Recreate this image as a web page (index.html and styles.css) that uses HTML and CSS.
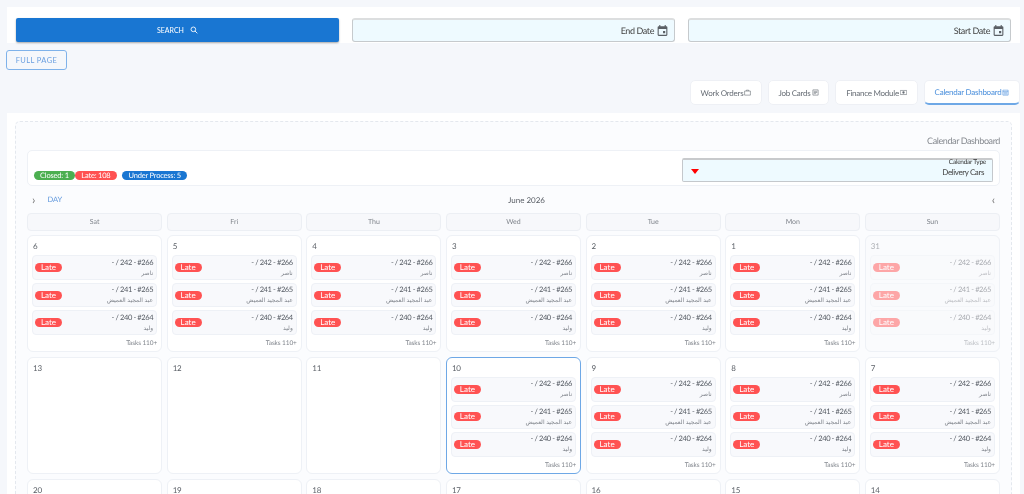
FILE: index.html
```html
<!DOCTYPE html>
<html>

<head>
    <title>Calendar Dashboard</title>
    <link rel="stylesheet" href="styles.css">
</head>

<body>
    <svg class="defs" width="0" height="0">
        <symbol id="cal" viewBox="0 0 24 24">
            <path d="M19 4h-1V2h-2v2H8V2H6v2H5a2 2 0 0 0-2 2v14a2 2 0 0 0 2 2h14a2 2 0 0 0 2-2V6a2 2 0 0 0-2-2zm0 16H5V9h14v11zM13 13h4v4h-4z" fill="currentColor" />
        </symbol>
    </svg>

    <div class="search-card">
        <button class="search-btn">SEARCH
            <svg class="search-ico" viewBox="0 0 24 24" width="8" height="8"><circle cx="10" cy="10" r="7" fill="none" stroke="#fff" stroke-width="2.6" /><path d="M15 15l7 7" stroke="#fff" stroke-width="2.6" /></svg>
        </button>
        <div class="date-input">End Date <svg class="cal-ico"><use href="#cal" /></svg></div>
        <div class="date-input">Start Date <svg class="cal-ico"><use href="#cal" /></svg></div>
    </div>

    <button class="full-page">FULL PAGE</button>

    <div class="tabs">
        <div class="tab tab-w1">Work Orders
            <svg class="tab-ico" viewBox="0 0 12 12"><path d="M1 3.5h10v7H1zM4 3.5V2h4v1.5" fill="none" stroke="currentColor" /></svg>
        </div>
        <div class="tab tab-w2">Job Cards
            <svg class="tab-ico" viewBox="0 0 12 12"><path d="M1.5 1.5h9v9h-9zM3 4h6M3 6h6M3 8h4" fill="none" stroke="currentColor" /></svg>
        </div>
        <div class="tab tab-w3">Finance Module
            <svg class="tab-ico" viewBox="0 0 12 12"><path d="M.5 2.5h11v7H.5z" fill="none" stroke="currentColor" /><circle cx="6" cy="6" r="2" fill="currentColor" /></svg>
        </div>
        <div class="tab tab-w4 active">Calendar Dashboard
            <svg class="tab-ico" viewBox="0 0 12 12"><path d="M1.5 2h9v8.5h-9zM1.5 4.5h9M3 6.5h6M3 8.5h6" fill="none" stroke="currentColor" /></svg>
        </div>
    </div>

    <div class="main-card">
        <div class="inner">
            <div class="title">Calendar Dashboard</div>

            <div class="filter-row">
                <div class="chips">
                    <span class="chip green">Closed: 1</span>
                    <span class="chip red">Late: 108</span>
                    <span class="chip blue">Under Process: 5</span>
                </div>
                <div class="select">
                    <span class="arrow"></span>
                    <div class="select-text">
                        <div class="select-label">Calendar Type</div>
                        <div class="select-value">Delivery Cars</div>
                    </div>
                </div>
            </div>

            <div class="nav-row">
                <div class="nav-left"><span class="chev">&#8250;</span><span class="day">DAY</span></div>
                <div class="month">June 2026</div>
                <div class="nav-right"><span class="chev">&#8249;</span></div>
            </div>

            <div class="week">
                <div class="wd">Sat</div>
                <div class="wd">Fri</div>
                <div class="wd">Thu</div>
                <div class="wd">Wed</div>
                <div class="wd">Tue</div>
                <div class="wd">Mon</div>
                <div class="wd">Sun</div>
            </div>

            <div class="days">
                <div class="cell">
                    <div class="num">6</div>
                    <div class="task"><span class="late">Late</span><div class="info" dir="rtl"><div class="code">#266 - 242 / -</div><div class="name">ناصر</div></div></div>
                    <div class="task"><span class="late">Late</span><div class="info" dir="rtl"><div class="code">#265 - 241 / -</div><div class="name">عبد المجيد العميض</div></div></div>
                    <div class="task"><span class="late">Late</span><div class="info" dir="rtl"><div class="code">#264 - 240 / -</div><div class="name">وليد</div></div></div>
                    <div class="more">Tasks 110+</div>
                </div>
                <div class="cell">
                    <div class="num">5</div>
                    <div class="task"><span class="late">Late</span><div class="info" dir="rtl"><div class="code">#266 - 242 / -</div><div class="name">ناصر</div></div></div>
                    <div class="task"><span class="late">Late</span><div class="info" dir="rtl"><div class="code">#265 - 241 / -</div><div class="name">عبد المجيد العميض</div></div></div>
                    <div class="task"><span class="late">Late</span><div class="info" dir="rtl"><div class="code">#264 - 240 / -</div><div class="name">وليد</div></div></div>
                    <div class="more">Tasks 110+</div>
                </div>
                <div class="cell">
                    <div class="num">4</div>
                    <div class="task"><span class="late">Late</span><div class="info" dir="rtl"><div class="code">#266 - 242 / -</div><div class="name">ناصر</div></div></div>
                    <div class="task"><span class="late">Late</span><div class="info" dir="rtl"><div class="code">#265 - 241 / -</div><div class="name">عبد المجيد العميض</div></div></div>
                    <div class="task"><span class="late">Late</span><div class="info" dir="rtl"><div class="code">#264 - 240 / -</div><div class="name">وليد</div></div></div>
                    <div class="more">Tasks 110+</div>
                </div>
                <div class="cell">
                    <div class="num">3</div>
                    <div class="task"><span class="late">Late</span><div class="info" dir="rtl"><div class="code">#266 - 242 / -</div><div class="name">ناصر</div></div></div>
                    <div class="task"><span class="late">Late</span><div class="info" dir="rtl"><div class="code">#265 - 241 / -</div><div class="name">عبد المجيد العميض</div></div></div>
                    <div class="task"><span class="late">Late</span><div class="info" dir="rtl"><div class="code">#264 - 240 / -</div><div class="name">وليد</div></div></div>
                    <div class="more">Tasks 110+</div>
                </div>
                <div class="cell">
                    <div class="num">2</div>
                    <div class="task"><span class="late">Late</span><div class="info" dir="rtl"><div class="code">#266 - 242 / -</div><div class="name">ناصر</div></div></div>
                    <div class="task"><span class="late">Late</span><div class="info" dir="rtl"><div class="code">#265 - 241 / -</div><div class="name">عبد المجيد العميض</div></div></div>
                    <div class="task"><span class="late">Late</span><div class="info" dir="rtl"><div class="code">#264 - 240 / -</div><div class="name">وليد</div></div></div>
                    <div class="more">Tasks 110+</div>
                </div>
                <div class="cell">
                    <div class="num">1</div>
                    <div class="task"><span class="late">Late</span><div class="info" dir="rtl"><div class="code">#266 - 242 / -</div><div class="name">ناصر</div></div></div>
                    <div class="task"><span class="late">Late</span><div class="info" dir="rtl"><div class="code">#265 - 241 / -</div><div class="name">عبد المجيد العميض</div></div></div>
                    <div class="task"><span class="late">Late</span><div class="info" dir="rtl"><div class="code">#264 - 240 / -</div><div class="name">وليد</div></div></div>
                    <div class="more">Tasks 110+</div>
                </div>
                <div class="cell other-month">
                    <div class="num">31</div>
                    <div class="task"><span class="late">Late</span><div class="info" dir="rtl"><div class="code">#266 - 242 / -</div><div class="name">ناصر</div></div></div>
                    <div class="task"><span class="late">Late</span><div class="info" dir="rtl"><div class="code">#265 - 241 / -</div><div class="name">عبد المجيد العميض</div></div></div>
                    <div class="task"><span class="late">Late</span><div class="info" dir="rtl"><div class="code">#264 - 240 / -</div><div class="name">وليد</div></div></div>
                    <div class="more">Tasks 110+</div>
                </div>

                <div class="cell"><div class="num">13</div></div>
                <div class="cell"><div class="num">12</div></div>
                <div class="cell"><div class="num">11</div></div>
                <div class="cell today">
                    <div class="num">10</div>
                    <div class="task"><span class="late">Late</span><div class="info" dir="rtl"><div class="code">#266 - 242 / -</div><div class="name">ناصر</div></div></div>
                    <div class="task"><span class="late">Late</span><div class="info" dir="rtl"><div class="code">#265 - 241 / -</div><div class="name">عبد المجيد العميض</div></div></div>
                    <div class="task"><span class="late">Late</span><div class="info" dir="rtl"><div class="code">#264 - 240 / -</div><div class="name">وليد</div></div></div>
                    <div class="more">Tasks 110+</div>
                </div>
                <div class="cell">
                    <div class="num">9</div>
                    <div class="task"><span class="late">Late</span><div class="info" dir="rtl"><div class="code">#266 - 242 / -</div><div class="name">ناصر</div></div></div>
                    <div class="task"><span class="late">Late</span><div class="info" dir="rtl"><div class="code">#265 - 241 / -</div><div class="name">عبد المجيد العميض</div></div></div>
                    <div class="task"><span class="late">Late</span><div class="info" dir="rtl"><div class="code">#264 - 240 / -</div><div class="name">وليد</div></div></div>
                    <div class="more">Tasks 110+</div>
                </div>
                <div class="cell">
                    <div class="num">8</div>
                    <div class="task"><span class="late">Late</span><div class="info" dir="rtl"><div class="code">#266 - 242 / -</div><div class="name">ناصر</div></div></div>
                    <div class="task"><span class="late">Late</span><div class="info" dir="rtl"><div class="code">#265 - 241 / -</div><div class="name">عبد المجيد العميض</div></div></div>
                    <div class="task"><span class="late">Late</span><div class="info" dir="rtl"><div class="code">#264 - 240 / -</div><div class="name">وليد</div></div></div>
                    <div class="more">Tasks 110+</div>
                </div>
                <div class="cell">
                    <div class="num">7</div>
                    <div class="task"><span class="late">Late</span><div class="info" dir="rtl"><div class="code">#266 - 242 / -</div><div class="name">ناصر</div></div></div>
                    <div class="task"><span class="late">Late</span><div class="info" dir="rtl"><div class="code">#265 - 241 / -</div><div class="name">عبد المجيد العميض</div></div></div>
                    <div class="task"><span class="late">Late</span><div class="info" dir="rtl"><div class="code">#264 - 240 / -</div><div class="name">وليد</div></div></div>
                    <div class="more">Tasks 110+</div>
                </div>

                <div class="cell"><div class="num">20</div></div>
                <div class="cell"><div class="num">19</div></div>
                <div class="cell"><div class="num">18</div></div>
                <div class="cell"><div class="num">17</div></div>
                <div class="cell"><div class="num">16</div></div>
                <div class="cell"><div class="num">15</div></div>
                <div class="cell"><div class="num">14</div></div>
            </div>
        </div>
    </div>
</body>

</html>
```

FILE: styles.css
```css
* {
    box-sizing: border-box;
    margin: 0;
    padding: 0;
}

html {
    background-color: #f5f7fb;
}

html,
body {
    height: 100vh;
    overflow: hidden;
}

body {
    padding: 7px 4px 0 6px;
    font-family: "Lato", "Noto Sans", sans-serif;
    color: #555b63;
    text-rendering: geometricPrecision;
    will-change: transform;
}

.defs {
    position: absolute;
}

/* search bar */
.search-card {
    display: grid;
    grid-template-columns: repeat(3, 1fr);
    gap: 13px;
    height: 36px;
    margin-left: 1px;
    padding: 11px 9px 0 9px;
    background: #ffffff;
}

.search-btn {
    height: 24px;
    display: flex;
    align-items: center;
    justify-content: center;
    gap: 6px;
    border: none;
    border-radius: 2px;
    background: #1976d2;
    color: #ffffff;
    font-family: inherit;
    font-size: 7px;
    box-shadow: 0 1px 2px rgba(0, 0, 0, 0.35);
}

.date-input {
    height: 24px;
    display: flex;
    align-items: center;
    justify-content: flex-end;
    gap: 2px;
    padding-right: 5px;
    background: #eefaff;
    border: 1px solid #c6cacd;
    border-top: 2px solid #dcdedf;
    border-radius: 3px;
    font-size: 9px;
    letter-spacing: -0.4px;
    color: #444444;
}

.cal-ico {
    width: 13px;
    height: 13px;
    color: #5a5f65;
}

.full-page {
    display: block;
    width: 61px;
    height: 20px;
    margin-top: 7px;
    background: transparent;
    border: 1px solid #7fb2ea;
    border-radius: 3px;
    color: #6a9fe0;
    font-family: inherit;
    font-size: 7.5px;
    letter-spacing: 0.4px;
}

/* tabs */
.tabs {
    display: flex;
    justify-content: flex-end;
    gap: 6px;
    margin-top: 10px;
}

.tab {
    height: 25px;
    display: flex;
    align-items: center;
    justify-content: center;
    gap: 1px;
    background: #ffffff;
    border-radius: 5px;
    border: 1px solid #eef0f5;
    font-size: 8px;
    letter-spacing: -0.25px;
    color: #666c74;
}

.tab-w1 {
    width: 72px;
}

.tab-w2 {
    width: 61px;
}

.tab-w3 {
    width: 83px;
}

.tab-w4 {
    width: 96px;
}

.tab.active {
    color: #4a8fdc;
    border-bottom: 2px solid #6ea8e6;
}

.tab-ico {
    width: 7px;
    height: 7px;
}

/* main card */
.main-card {
    margin: 8px 0 0 1px;
    padding: 8px 8px 0 8px;
    background: #ffffff;
    height: 400px;
}

.inner {
    padding: 0 11px 0 11px;
    background: #fbfcfe;
    border: 1px dashed #e4e8ee;
    border-bottom: none;
    border-radius: 5px 5px 0 0;
}

.title {
    height: 28px;
    padding-top: 12px;
    text-align: right;
    font-size: 9px;
    letter-spacing: -0.4px;
    line-height: 13px;
    color: #85898f;
}

.filter-row {
    height: 36px;
    display: flex;
    justify-content: space-between;
    align-items: flex-start;
    background: #ffffff;
    border: 1px solid #eef1f6;
    border-radius: 5px;
    padding: 7px 6px 0 6px;
}

.chips {
    display: flex;
    align-items: center;
    margin-top: 13px;
    font-size: 7.5px;
    letter-spacing: -0.2px;
}

.chip {
    height: 9px;
    display: flex;
    align-items: center;
    border-radius: 5px;
    color: #ffffff;
    padding: 0 6.5px;
}

.chip.green {
    background: #4caf50;
    padding: 0 6px;
}

.chip.red {
    background: #ff5252;
}

.chip.blue {
    background: #1976d2;
    margin-left: 5px;
}

.select {
    width: 311px;
    height: 24px;
    display: flex;
    justify-content: space-between;
    background: #eefaff;
    border: 1px solid #c4c8cc;
    border-top: 2px solid #c8cacc;
    border-radius: 2px;
    padding: 0 8px;
}

.arrow {
    width: 0;
    height: 0;
    margin-top: 9px;
    border-left: 4px solid transparent;
    border-right: 4px solid transparent;
    border-top: 5px solid #ff0000;
}

.select-text {
    text-align: right;
}

.select-label {
    font-size: 6.5px;
    letter-spacing: -0.25px;
    line-height: 6px;
    color: #333333;
    margin-right: -2px;
}

.select-value {
    font-size: 8px;
    letter-spacing: -0.4px;
    line-height: 13px;
    color: #444444;
}

.nav-row {
    height: 27px;
    display: flex;
    align-items: center;
    justify-content: space-between;
    font-size: 8px;
}

.nav-left,
.nav-right {
    display: flex;
    align-items: center;
}

.nav-left {
    width: 146px;
    padding-left: 5px;
    gap: 12px;
}

.nav-right {
    width: 120px;
    justify-content: flex-end;
    padding-right: 5px;
}

.chev {
    font-size: 12px;
    color: #777777;
}

.day {
    font-size: 7.5px;
    color: #5f97dc;
}

.month {
    color: #5c6168;
}

/* calendar */
.week,
.days {
    display: grid;
    grid-template-columns: repeat(7, 1fr);
    column-gap: 4.5px;
}

.wd {
    height: 18px;
    display: flex;
    align-items: center;
    justify-content: center;
    background: #f7f8fb;
    border: 1px solid #eceff4;
    border-radius: 4px;
    font-size: 7px;
    color: #80858c;
}

.days {
    margin-top: 4px;
    row-gap: 5px;
}

.cell {
    height: 116.8px;
    padding: 5px 4px 0 4px;
    background: #ffffff;
    border: 1px solid #eef1f6;
    border-radius: 6px;
}

.cell.today {
    border-color: #6ea8e6;
}

.cell.other-month {
    background: #fafbfd;
}

.cell.other-month > * {
    opacity: 0.5;
}

.num {
    height: 11.3px;
    padding-left: 1px;
    font-size: 8px;
    letter-spacing: -0.2px;
    line-height: 11px;
    color: #5c6168;
}

.task {
    height: 24.5px;
    display: flex;
    align-items: center;
    justify-content: space-between;
    margin-top: 3px;
    padding: 0 3px 0 2px;
    background: #f8f9fc;
    border: 1px solid #eef1f6;
    border-radius: 4px;
}

.late {
    width: 27px;
    height: 9px;
    line-height: 9px;
    text-align: center;
    background: #ff5252;
    border-radius: 5px;
    color: #ffffff;
    font-size: 8px;
}

.code {
    font-size: 7.5px;
    letter-spacing: -0.4px;
    line-height: 10px;
    color: #555b63;
}

.name {
    font-family: "Noto Sans", sans-serif;
    font-size: 6px;
    line-height: 10px;
    color: #80858c;
}

.more {
    margin-top: 4px;
    text-align: right;
    font-size: 6.5px;
    letter-spacing: -0.1px;
    line-height: 10px;
    color: #80858c;
}
```
